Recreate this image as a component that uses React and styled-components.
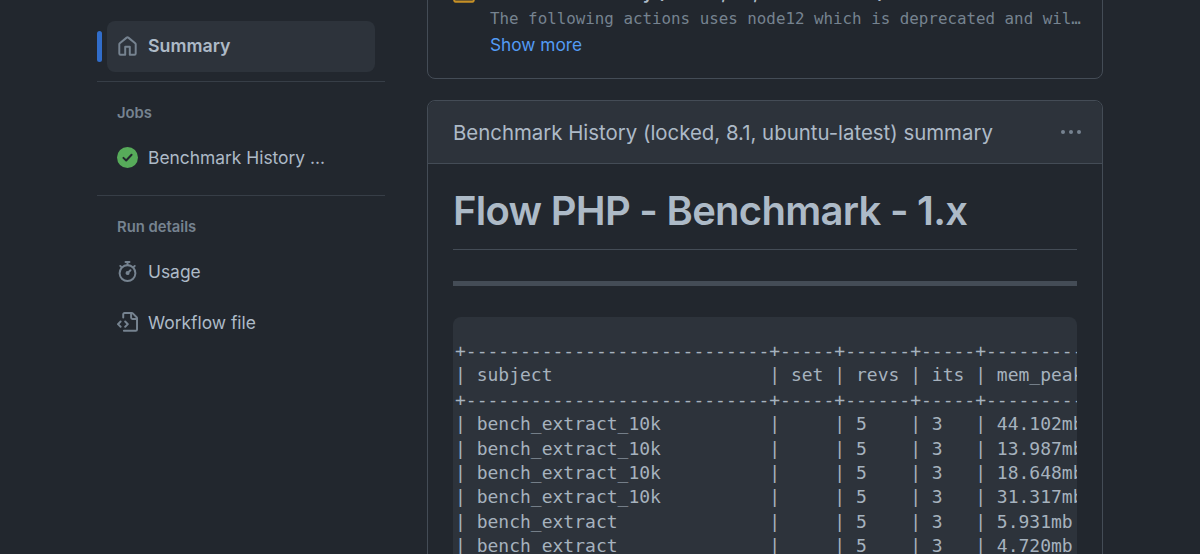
import React from 'react';
import styled, { createGlobalStyle } from 'styled-components';

const GlobalStyle = createGlobalStyle`
    html, body {
        margin: 0;
        height: 554px;
        overflow: hidden;
        background: #22272e;
        font-family: Inter, "Liberation Sans", sans-serif;
        color: #adbac7;
    }
`;

const HOME = 'M6.906.664a1.749 1.749 0 0 1 2.187 0l5.25 4.2c.415.332.657.835.657 1.367v7.019A1.75 1.75 0 0 1 13.25 15h-3.5a.75.75 0 0 1-.75-.75V9H7v5.25a.75.75 0 0 1-.75.75h-3.5A1.75 1.75 0 0 1 1 13.25V6.23c0-.531.242-1.034.657-1.366l5.25-4.2Zm1.25 1.171a.25.25 0 0 0-.312 0l-5.25 4.2a.25.25 0 0 0-.094.196v7.019c0 .138.112.25.25.25H5.5V8.25a.75.75 0 0 1 .75-.75h3.5a.75.75 0 0 1 .75.75v5.25h2.75a.25.25 0 0 0 .25-.25V6.23a.25.25 0 0 0-.094-.195Z';
const STOPWATCH = 'M5.75.75A.75.75 0 0 1 6.5 0h3a.75.75 0 0 1 0 1.5h-.75v1l-.001.041a6.724 6.724 0 0 1 3.464 1.435l.007-.006.75-.75a.749.749 0 0 1 1.06 1.06l-.75.75-.006.007a6.75 6.75 0 1 1-10.548 0L2.72 5.03l-.75-.75a.751.751 0 0 1 .018-1.042.751.751 0 0 1 1.042-.018l.75.75.007.006A6.72 6.72 0 0 1 7.25 2.541V1.5H6.5a.75.75 0 0 1-.75-.75ZM8 14.5a5.25 5.25 0 1 0-.001-10.501A5.25 5.25 0 0 0 8 14.5Zm.389-6.7 1.33-1.33a.75.75 0 1 1 1.061 1.06L9.45 8.861A1.503 1.503 0 0 1 8 10.75a1.499 1.499 0 1 1 .389-2.95Z';
const FILE_CODE = 'M4 1.75C4 .784 4.784 0 5.75 0h5.586c.464 0 .909.184 1.237.513l2.914 2.914c.329.328.513.773.513 1.237v8.586A1.75 1.75 0 0 1 14.25 15h-9a.75.75 0 0 1 0-1.5h9a.25.25 0 0 0 .25-.25V6h-2.75A1.75 1.75 0 0 1 10 4.25V1.5H5.75a.25.25 0 0 0-.25.25v2.5a.75.75 0 0 1-1.5 0Zm1.72 4.97a.75.75 0 0 1 1.06 0l2 2a.75.75 0 0 1 0 1.06l-2 2a.749.749 0 0 1-1.275-.326.749.749 0 0 1 .215-.734l1.47-1.47-1.47-1.47a.75.75 0 0 1 0-1.06ZM3.28 7.78 1.81 9.25l1.47 1.47a.751.751 0 0 1-.018 1.042.751.751 0 0 1-1.042.018l-2-2a.75.75 0 0 1 0-1.06l2-2a.751.751 0 0 1 1.042.018.751.751 0 0 1 .018 1.042Zm8.22-6.218V4.25c0 .138.112.25.25.25h2.688l-.011-.013-2.914-2.914-.013-.011Z';
const ALERT = 'M6.457 1.047c.659-1.234 2.427-1.234 3.086 0l6.082 11.378A1.75 1.75 0 0 1 14.082 15H1.918a1.75 1.75 0 0 1-1.543-2.575Zm1.763.707a.25.25 0 0 0-.44 0L1.698 13.132a.25.25 0 0 0 .22.368h12.164a.25.25 0 0 0 .22-.368Zm.53 3.996v2.5a.75.75 0 0 1-1.5 0v-2.5a.75.75 0 0 1 1.5 0ZM9 11a1 1 0 1 1-2 0 1 1 0 0 1 2 0Z';

const Octicon = ({ d, size = 21, color = '#768390' }) => (
    <svg width={size} height={size} viewBox="0 0 16 16" fill={color} style={{ flexShrink: 0 }}>
        <path d={d} />
    </svg>
);

const CheckBadge = () => (
    <svg width="21" height="21" viewBox="0 0 16 16" style={{ flexShrink: 0 }}>
        <circle cx="8" cy="8" r="8" fill="#57ab5a" />
        <path d="M4.9 8.3 7 10.3l4.1-4.4" fill="none" stroke="#22272e" strokeWidth="1.5" strokeLinecap="round" strokeLinejoin="round" />
    </svg>
);

const row = (a, b, c, d, e) =>
    `| ${a.padEnd(26)} | ${b.padEnd(3)} | ${c.padEnd(4)} | ${d.padEnd(3)} | ${e.padEnd(12)} |`;
const rule = `+${'-'.repeat(28)}+${'-'.repeat(5)}+${'-'.repeat(6)}+${'-'.repeat(5)}+${'-'.repeat(14)}+`;

const tableLines = [
    rule,
    row('subject', 'set', 'revs', 'its', 'mem_peak'),
    rule,
    row('bench_extract_10k', '', '5', '3', '44.102mb'),
    row('bench_extract_10k', '', '5', '3', '13.987mb'),
    row('bench_extract_10k', '', '5', '3', '18.648mb'),
    row('bench_extract_10k', '', '5', '3', '31.317mb'),
    row('bench_extract', '', '5', '3', '5.931mb'),
    row('bench_extract', '', '5', '3', '4.720mb'),
];

const App = () => {
    return (
        <Page>
            <GlobalStyle />
            <Sidebar>
                <ActiveRow>
                    <ActiveBar />
                    <SummaryItem>
                        <Octicon d={HOME} />
                        <SummaryLabel>Summary</SummaryLabel>
                    </SummaryItem>
                </ActiveRow>
                <Divider />
                <Section>
                    <SectionLabel>Jobs</SectionLabel>
                    <NavItem>
                        <CheckBadge />
                        <span>Benchmark History ...</span>
                    </NavItem>
                </Section>
                <Divider />
                <Section>
                    <SectionLabel>Run details</SectionLabel>
                    <NavItem>
                        <Octicon d={STOPWATCH} />
                        <span>Usage</span>
                    </NavItem>
                    <NavItem>
                        <Octicon d={FILE_CODE} />
                        <span>Workflow file</span>
                    </NavItem>
                </Section>
            </Sidebar>
            <Main>
                <AnnotationCard>
                    <AlertSlot>
                        <Octicon d={ALERT} size={22} color="#c69026" />
                    </AlertSlot>
                    <AnnotationBody>
                        <AnnotationTitle>Benchmark History (locked, 8.1, ubuntu-latest)</AnnotationTitle>
                        <AnnotationText>The following actions uses node12 which is deprecated and wil…</AnnotationText>
                        <ShowMore>Show more</ShowMore>
                    </AnnotationBody>
                </AnnotationCard>
                <SummaryCard>
                    <CardHeader>
                        <span>Benchmark History (locked, 8.1, ubuntu-latest) summary</span>
                        <Kebab viewBox="0 0 22 6">
                            <circle cx="3" cy="3" r="2" />
                            <circle cx="11" cy="3" r="2" />
                            <circle cx="19" cy="3" r="2" />
                        </Kebab>
                    </CardHeader>
                    <CardBody>
                        <Title>Flow PHP - Benchmark - 1.x</Title>
                        <Rule />
                        <CodeBlock>{tableLines.join('\n')}</CodeBlock>
                    </CardBody>
                </SummaryCard>
            </Main>
        </Page>
    );
};

const Page = styled.div`
    display: flex;
    align-items: flex-start;
    gap: 42px;
    height: 554px;
    overflow: hidden;
    padding-left: 97px;
`;
const Sidebar = styled.nav`
    width: 288px;
    flex-shrink: 0;
    padding-top: 21px;
`;
const ActiveRow = styled.div`
    display: flex;
    align-items: center;
    gap: 5px;
`;
const ActiveBar = styled.div`
    width: 5px;
    height: 31px;
    border-radius: 3px;
    background: #316dca;
`;
const SummaryItem = styled.div`
    display: flex;
    align-items: center;
    gap: 10px;
    width: 268px;
    height: 51px;
    box-sizing: border-box;
    padding-left: 10px;
    border-radius: 8px;
    background: #2d333b;
    font-size: 17.8px;
    font-weight: 600;
`;
const SummaryLabel = styled.span`
    padding-bottom: 3px;
`;
const Divider = styled.div`
    height: 1px;
    margin-top: 9px;
    background: #373e47;
`;
const Section = styled.div`
    padding: 22px 0 3px 20px;
`;
const SectionLabel = styled.div`
    font-size: 14.8px;
    line-height: 18px;
    font-weight: 600;
    color: #768390;
    margin-bottom: 10px;
`;
const NavItem = styled.div`
    display: flex;
    align-items: center;
    gap: 10px;
    height: 51px;
    font-size: 17.4px;
`;
const Main = styled.main`
    width: 676px;
    flex-shrink: 0;
    margin-top: -41px;
`;
const AnnotationCard = styled.div`
    display: flex;
    gap: 15px;
    box-sizing: border-box;
    height: 120px;
    padding: 20px 21px 20px 25px;
    border: 1px solid #444c56;
    border-radius: 8px;
`;
const AlertSlot = styled.div`
    padding-top: 2px;
`;
const AnnotationBody = styled.div`
    flex: 1;
    min-width: 0;
    line-height: 26px;
`;
const AnnotationTitle = styled.div`
    font-size: 17.6px;
    font-weight: 600;
    white-space: nowrap;
`;
const AnnotationText = styled.div`
    font-family: "DejaVu Sans Mono", "Liberation Mono", monospace;
    font-size: 15.83px;
    color: #768390;
    white-space: nowrap;
`;
const ShowMore = styled.a`
    font-size: 17.3px;
    color: #539bf5;
`;
const SummaryCard = styled.section`
    margin-top: 21px;
    border: 1px solid #444c56;
    border-radius: 8px;
`;
const CardHeader = styled.header`
    display: flex;
    align-items: center;
    justify-content: space-between;
    height: 62px;
    padding: 0 20px 0 25px;
    border-bottom: 1px solid #444c56;
    border-radius: 8px 8px 0 0;
    background: #2d333b;
    font-size: 20.4px;
`;
const Kebab = styled.svg`
    width: 22px;
    height: 6px;
    fill: #768390;
`;
const CardBody = styled.div`
    padding: 21px 25px 40px 25px;
`;
const Title = styled.h1`
    margin: 0;
    padding-bottom: 12px;
    border-bottom: 1px solid #444c56;
    font-size: 40px;
    line-height: 52px;
    font-weight: 600;
    letter-spacing: -0.73px;
`;
const Rule = styled.hr`
    height: 5px;
    margin: 31px 0;
    border: 0;
    background: #444c56;
`;
const CodeBlock = styled.pre`
    margin: 0;
    padding: 22px 0 20px 2px;
    overflow: hidden;
    border-radius: 8px;
    background: #2d333b;
    color: #a6b2be;
    font-family: "DejaVu Sans Mono", "Liberation Mono", monospace;
    font-size: 18px;
    line-height: 24.4px;
`;

export default App;
